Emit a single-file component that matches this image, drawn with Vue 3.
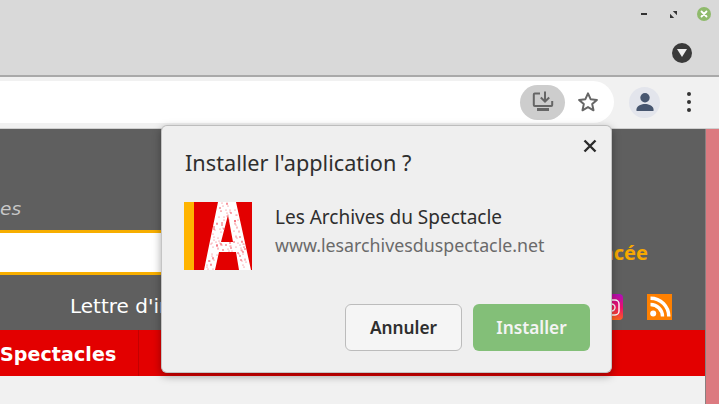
<script setup>
const inA = (x, y) => {
  const left = 34 - (14 / 68) * y
  const right = 52 + (15 / 68) * y
  if (x < left + 1 || x > right - 1) return false
  if (y > 12 && y < 41 && x > 44 - (y - 13) * 0.26 && x < 44 + (y - 13) * 0.2) return false
  if (y > 49 && x > 34 - (y - 50) * 0.2 && x < 52 + (y - 50) * 0.2) return false
  return true
}
const specks = []
let s = 7
for (let i = 0; i < 260; i++) {
  s = (s * 137 + 71) % 1009
  const x = 18 + (s % 50)
  s = (s * 137 + 71) % 1009
  const y = 1 + (s % 67)
  if (inA(x, y)) specks.push({ x, y, r: i % 4 === 0 ? 0.8 : 0.5 })
}
</script>

<template>
  <div class="window">
    <header class="titlebar">
      <div class="controls">
        <span class="minimize"></span>
        <svg class="restore" width="7" height="7" viewBox="0 0 10 10">
          <path d="M0 10V4l6 6zM10 0v6L4 0z" fill="#333" />
        </svg>
        <span class="close"><svg width="14" height="14" viewBox="0 0 14 14"><path d="M4.500 4.500l5 5M9.500 4.500l-5 5" stroke="#fff" stroke-width="1.800" stroke-linecap="round" /></svg></span>
      </div>
      <div class="tab-row">
        <span class="tab-search"><svg width="10" height="8" viewBox="0 0 10 8"><path d="M0 0h10L5 8z" fill="#eee" /></svg></span>
      </div>
    </header>

    <div class="toolbar">
      <div class="omnibox">
        <span class="install-chip">
          <svg width="24" height="24" viewBox="0 0 24 24" fill="none" stroke="#666" stroke-width="2">
            <path d="M9 3.500H3.800a1 1 0 0 0-1 1V15a1 1 0 0 0 1 1h16.400a1 1 0 0 0 1-1V11" />
            <path d="M14 1.500v9.500M9.800 7.500l4.200 4 4.200-4" />
            <path d="M6 19.500h12" stroke-width="3" />
          </svg>
        </span>
        <svg class="star" width="22" height="22" viewBox="0 0 22 22" fill="none" stroke="#666" stroke-width="2" stroke-linejoin="round">
          <path d="M11 2.400l2.600 5.800 6.300.7-4.700 4.200 1.300 6.200-5.500-3.200-5.500 3.200 1.300-6.200L2.100 8.900l6.300-.7z" />
        </svg>
      </div>
      <span class="avatar">
        <svg width="22" height="22" viewBox="0 0 22 22" fill="#47566f">
          <circle cx="11" cy="6.700" r="4.700" />
          <path d="M2.500 20v-1.800c0-3.500 5.500-5.200 8.500-5.200s8.500 1.700 8.500 5.200V20z" />
        </svg>
      </span>
      <span class="kebab"><i></i><i></i><i></i></span>
    </div>

    <main class="page">
      <div class="page-main">
        <section class="dark">
          <div class="hint">es</div>
          <div class="search-row">
            <div class="search-input"></div>
            <a class="advanced">Recherche avancée</a>
          </div>
          <div class="news-row">
            <span class="news">Lettre d'information</span>
            <span class="socials">
              <svg class="insta" width="24" height="26" viewBox="0 0 24 26">
                <defs>
                  <linearGradient id="ig" x1="1" y1="0" x2="0.700" y2="1">
                    <stop offset="0" stop-color="#a80fc0" />
                    <stop offset="0.500" stop-color="#ee0f6a" />
                    <stop offset="1" stop-color="#ff6a1a" />
                  </linearGradient>
                </defs>
                <rect width="24" height="26" rx="4" fill="url(#ig)" />
                <rect x="5" y="6" width="15" height="15" rx="4" fill="none" stroke="#fff" stroke-width="1.400" />
                <circle cx="12.500" cy="13.500" r="3.500" fill="none" stroke="#fff" stroke-width="1.400" />
              </svg>
              <svg width="25" height="26" viewBox="0 0 25 26">
                <rect width="25" height="26" fill="#ff8000" />
                <circle cx="6.200" cy="19.500" r="3" fill="#fff" />
                <path d="M3.500 10.500a12 12 0 0 1 12 12" fill="none" stroke="#fff" stroke-width="3.400" />
                <path d="M3.500 4.200a18.300 18.300 0 0 1 18.300 18.300" fill="none" stroke="#fff" stroke-width="3.400" />
              </svg>
            </span>
          </div>
        </section>
        <nav class="menu">
          <span class="menu-item">Spectacles</span>
        </nav>
      </div>
      <aside class="side"></aside>
    </main>

    <div class="dialog">
      <div class="dialog-head">
        <h2>Installer l'application ?</h2>
        <svg class="dialog-close" width="14" height="14" viewBox="0 0 14 14">
          <path d="M1.500 1.500l11 11M12.500 1.500l-11 11" stroke="#2b2b2b" stroke-width="2.400" />
        </svg>
      </div>
      <div class="app-row">
        <svg class="app-icon" width="68" height="68" viewBox="0 0 68 68">
          <rect width="68" height="68" fill="#e30000" />
          <rect width="10" height="68" fill="#ffb400" />
          <path fill="#fff" fill-rule="evenodd" d="M34 0H52L67 68H55L52 50H35L31 68H20ZM44 13L37 40H49Z" />
          <circle v-for="(d, i) in specks" :key="i" :cx="d.x" :cy="d.y" :r="d.r" fill="#f04050" />
        </svg>
        <div class="app-text">
          <div class="app-name">Les Archives du Spectacle</div>
          <div class="app-url">www.lesarchivesduspectacle.net</div>
        </div>
      </div>
      <div class="actions">
        <button class="btn cancel">Annuler</button>
        <button class="btn install">Installer</button>
      </div>
    </div>
  </div>
</template>

<style scoped>
.window {
  position: relative;
  width: 719px;
  height: 404px;
  overflow: hidden;
  display: flex;
  flex-direction: column;
  background: #f1f1f1;
  font-family: "DejaVu Sans", sans-serif;
}
.titlebar {
  height: 75px;
  flex: none;
  background: #d9d9d9;
  border-bottom: 2px solid #a9a9a9;
  box-sizing: content-box;
}
.controls {
  height: 28px;
  display: flex;
  align-items: center;
  justify-content: flex-end;
  padding-right: 8px;
}
.minimize {
  width: 6px;
  height: 2px;
  background: #333;
  margin-right: 23px;
}
.restore {
  margin-right: 20px;
}
.close {
  width: 14px;
  height: 14px;
  border-radius: 50%;
  background: #8fba6c;
  display: flex;
}
.tab-row {
  display: flex;
  justify-content: flex-end;
  padding: 15px 27px 0 0;
}
.tab-search {
  width: 20px;
  height: 20px;
  border-radius: 50%;
  background: #3a3a3a;
  display: flex;
  align-items: center;
  justify-content: center;
}
.toolbar {
  height: 52px;
  flex: none;
  box-sizing: border-box;
  background: #f1f1f1;
  border-bottom: 1px solid #cfcfcf;
  display: flex;
  align-items: center;
  padding: 0 0 1px 0;
}
.omnibox {
  width: 614px;
  height: 42px;
  flex: none;
  background: #fff;
  border-radius: 0 21px 21px 0;
  display: flex;
  align-items: center;
  justify-content: flex-end;
  padding-right: 15px;
  box-sizing: border-box;
}
.install-chip {
  width: 45px;
  height: 35px;
  border-radius: 18px;
  background: #cdcdcd;
  display: flex;
  align-items: center;
  justify-content: center;
  margin-right: 12px;
}
.avatar {
  width: 31px;
  height: 31px;
  border-radius: 50%;
  background: #e3e5ec;
  margin-left: 15px;
  display: flex;
  align-items: center;
  justify-content: center;
}
.kebab {
  margin-left: 27px;
  display: flex;
  flex-direction: column;
  gap: 4px;
}
.kebab i {
  width: 4px;
  height: 4px;
  border-radius: 50%;
  background: #333;
  display: block;
}
.page {
  flex: 1;
  display: flex;
  min-height: 0;
}
.page-main {
  width: 705px;
  flex: none;
  background: #f1f1f1;
}
.side {
  flex: 1;
  background: #dc7a80;
  border-left: 1px solid #8a8080;
}
.dark {
  height: 201px;
  box-sizing: border-box;
  background: #5f5f5f;
  padding-top: 68px;
  display: flex;
  flex-direction: column;
}
.hint {
  height: 24px;
  line-height: 24px;
  font-size: 18.500px;
  font-style: italic;
  color: #c8c8c8;
}
.search-row {
  height: 45px;
  margin-top: 9px;
  display: flex;
  align-items: center;
  justify-content: space-between;
  padding-right: 57px;
}
.search-input {
  width: 300px;
  height: 45px;
  box-sizing: border-box;
  background: #fff;
  border: 3px solid #f7ae00;
  border-left: none;
}
.advanced {
  font-family: "Noto Sans", sans-serif;
  font-size: 20px;
  font-weight: 700;
  color: #f7a800;
  white-space: nowrap;
}
.news-row {
  margin-top: 19px;
  height: 26px;
  display: flex;
  align-items: center;
  justify-content: space-between;
  padding: 0 33px 0 70px;
}
.news {
  font-size: 20px;
  color: #fff;
  white-space: nowrap;
  margin-top: -2px;
}
.socials {
  display: flex;
  gap: 24px;
}
.menu {
  height: 46px;
  background: #e30000;
  display: flex;
}
.menu-item {
  width: 139px;
  box-sizing: border-box;
  border-right: 1px solid #c40000;
  color: #fff;
  font-size: 19px;
  font-weight: 700;
  line-height: 49px;
  letter-spacing: 0.1px;
  white-space: nowrap;
}
.dialog {
  position: absolute;
  left: 161px;
  top: 125px;
  width: 451px;
  height: 248px;
  box-sizing: border-box;
  background: #efefef;
  border: 1px solid #c4c4c4;
  border-top-color: #bdbdbd;
  border-radius: 6px;
  box-shadow: 0 3px 8px rgba(0, 0, 0, 0.35);
  padding: 23px 21px 21px 23px;
  display: flex;
  flex-direction: column;
  font-family: "Noto Sans", sans-serif;
  color: #2e2e2e;
}
.dialog-head {
  display: flex;
  justify-content: space-between;
  align-items: flex-start;
}
h2 {
  margin: 0;
  font-size: 21.700px;
  font-weight: 400;
  line-height: 28px;
}
.dialog-close {
  margin: -10px -7px 0 0;
}
.app-row {
  margin-top: 25px;
  display: flex;
  align-items: center;
}
.app-icon {
  flex: none;
  margin-left: -1px;
}
.app-text {
  margin-left: 23px;
  margin-top: -11px;
}
.app-name {
  font-size: 19px;
  line-height: 26px;
}
.app-url {
  font-size: 17.800px;
  line-height: 26px;
  color: #6a6a6a;
  margin-top: 2px;
}
.actions {
  margin-top: auto;
  display: flex;
  justify-content: flex-end;
  gap: 11px;
}
.btn {
  width: 117px;
  height: 47px;
  box-sizing: border-box;
  border-radius: 6px;
  font-family: "Noto Sans", sans-serif;
  font-size: 17.300px;
  font-weight: 600;
}
.cancel {
  background: #f5f5f5;
  border: 1px solid #bcbcbc;
  color: #2e2e2e;
}
.install {
  background: #83bf78;
  border: none;
  color: #f4f4f4;
}
</style>
